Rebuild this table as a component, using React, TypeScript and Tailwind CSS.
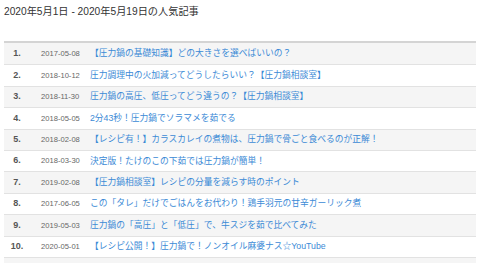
import React from "react";

const rows: [string, string][] = [
  ["2017-05-08", "【圧力鍋の基礎知識】どの大きさを選べばいいの？"],
  ["2018-10-12", "圧力調理中の火加減ってどうしたらいい？【圧力鍋相談室】"],
  ["2018-11-30", "圧力鍋の高圧、低圧ってどう違うの？【圧力鍋相談室】"],
  ["2018-05-05", "2分43秒！圧力鍋でソラマメを茹でる"],
  ["2018-02-08", "【レシピ有！】カラスカレイの煮物は、圧力鍋で骨ごと食べるのが正解！"],
  ["2018-03-30", "決定版！たけのこの下茹では圧力鍋が簡単！"],
  ["2019-02-08", "【圧力鍋相談室】レシピの分量を減らす時のポイント"],
  ["2017-06-05", "この「タレ」だけでごはんをお代わり！鶏手羽元の甘辛ガーリック煮"],
  ["2019-05-03", "圧力鍋の「高圧」と「低圧」で、牛スジを茹で比べてみた"],
  ["2020-05-01", "【レシピ公開！】圧力鍋で！ノンオイル麻婆ナス☆YouTube"],
];

export default function App() {
  return (
    <div
      className="w-[480px] h-[263px] overflow-hidden bg-white px-1"
      style={{ fontFamily: '"Liberation Sans", "Noto Sans CJK JP", sans-serif' }}
    >
      <div className="h-[41px] pt-[5px] text-[10.2px] leading-[14px] text-[#333]">
        2020年5月1日 - 2020年5月19日の人気記事
      </div>
      <div className="border-t-2 border-[#d4d4d4]">
        {rows.map(([date, title], i) => (
          <div
            key={i}
            className={`flex items-center h-[21.4px] ${i > 0 ? "border-t border-[#e2e2e2]" : ""} ${
              i % 2 === 0 ? "bg-[#f5f5f5]" : "bg-white"
            }`}
          >
            <div className="w-[26px] text-center text-[9px] font-bold text-[#555]">{i + 1}.</div>
            <div className="ml-[11px] w-[49px] text-[7.6px] text-[#666]">{date}</div>
            <div className="text-[8.75px] text-[#3b8ad6] whitespace-nowrap">{title}</div>
          </div>
        ))}
        <div className="h-[21px] border-t border-[#e2e2e2] bg-[#f5f5f5]" />
      </div>
    </div>
  );
}
